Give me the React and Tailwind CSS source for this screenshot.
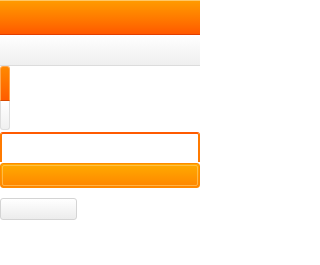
export default function App() {
  return (
    <div className="w-[200px] h-[265px] bg-white flex flex-col" style={{ fontFamily: '"Liberation Sans", Arial, sans-serif' }}>
      <div className="h-[35px] shrink-0 border-t border-t-[#ffc766] border-b border-b-[#e23e00] bg-gradient-to-b from-[#ff9a00] to-[#ff5800]" />
      <div className="h-[31px] shrink-0 border-b border-b-[#dcdcdc] bg-gradient-to-b from-white to-[#efefef]" />
      <div className="flex flex-col w-[10px] h-[64px] shrink-0">
        <div className="h-[35px] rounded-t-[3px] border border-[#ffa64d] border-b-[#d94a00] bg-gradient-to-b from-[#ff8800] to-[#ff5c00]" />
        <div className="flex-1 rounded-b-[3px] border border-t-0 border-[#dedede] bg-gradient-to-b from-white to-[#f0f0f0]" />
      </div>
      <div className="mt-[2px] h-[30px] shrink-0 rounded-t-[3px] border-2 border-b-0 border-t-[#ff5a00] border-x-[#ff7a00] bg-white" />
      <div className="mt-px h-[25px] shrink-0 rounded-[3px] border border-[#ff8a00] bg-gradient-to-b from-[#ffab00] to-[#ff8500] p-px">
        <div className="w-full h-full rounded-[2px] border border-[#ffc866]/70" />
      </div>
      <div className="mt-[10px] w-[77px] h-[22px] shrink-0 rounded-[3px] border border-[#d4d4d4] bg-gradient-to-b from-white to-[#ececec]" />
    </div>
  );
}
